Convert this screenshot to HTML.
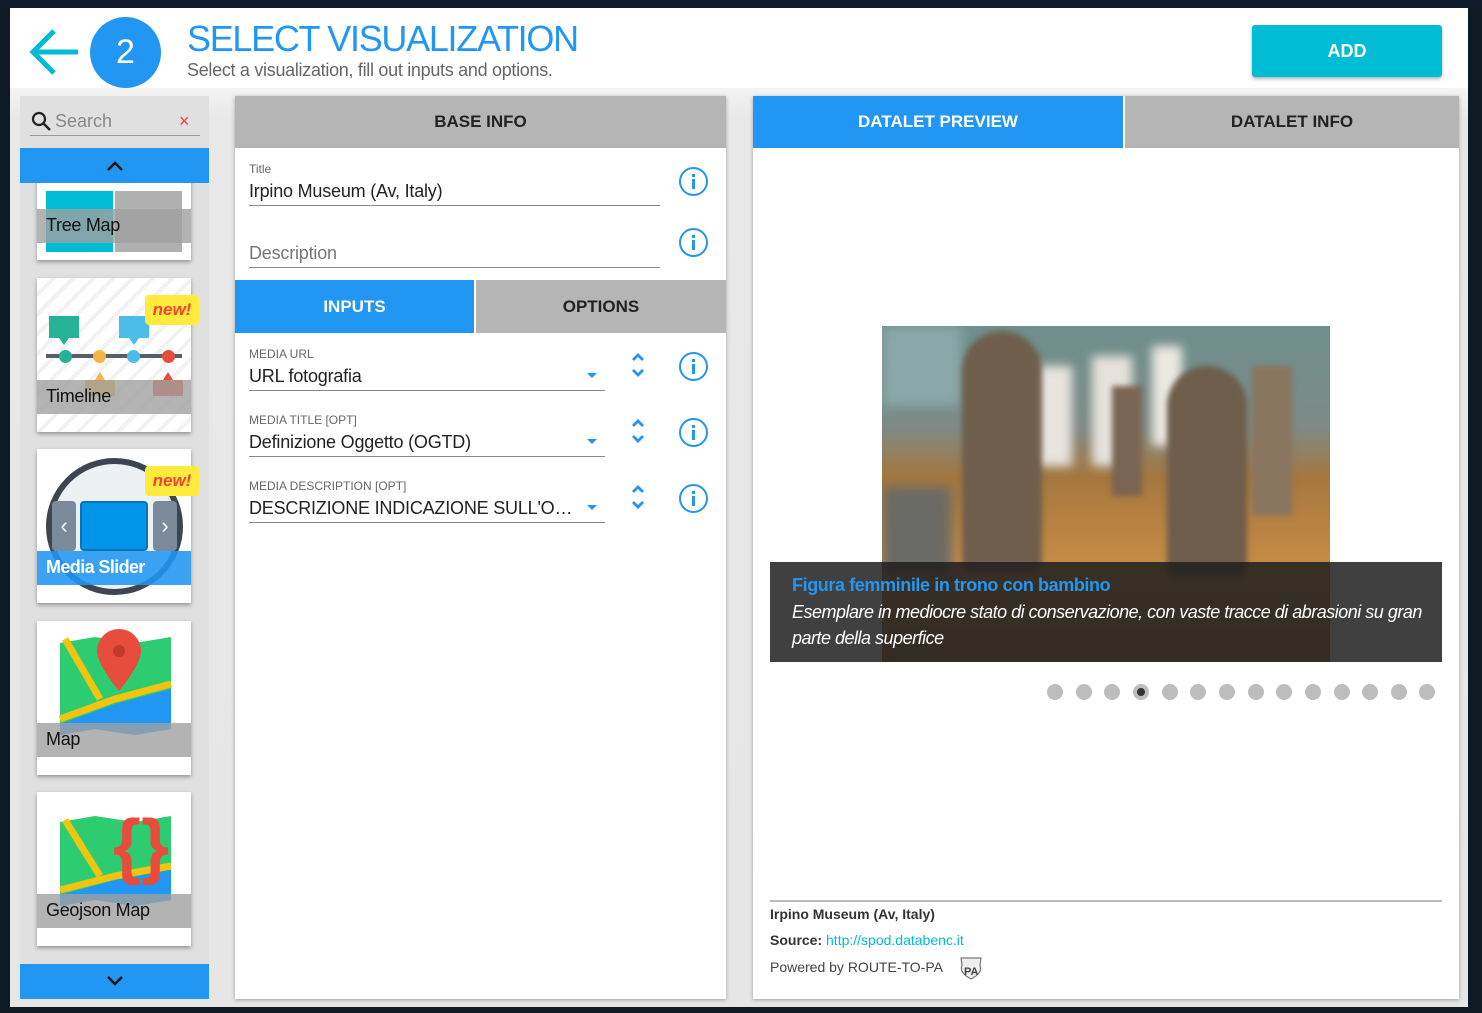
<!DOCTYPE html>
<html><head><meta charset="utf-8"><style>
*{box-sizing:border-box;margin:0;padding:0}
body{width:1482px;height:1013px;overflow:hidden;background:#0d1a24;font-family:"Liberation Sans",sans-serif;position:relative}
.abs{position:absolute}
#modal{left:10px;top:8px;width:1458px;height:999px;background:#fff}
.card{position:absolute;left:37px;width:154px;height:154px;background:#fff;box-shadow:0 2px 4px rgba(0,0,0,.35)}
.lbl{position:absolute;left:0;width:154px;height:34px;background:rgba(160,160,160,.8);font-size:18px;color:#111;padding:6px 9px;letter-spacing:-0.3px}
.new{position:absolute;right:-8px;width:54px;height:30px;background:#ffeb3b;border-radius:4px;color:#f44336;font-style:italic;font-weight:bold;font-size:17px;text-align:center;line-height:30px}
.ph{background:#b5b5b5;font-size:17px;font-weight:bold;color:#222;text-align:center}
.small{font-size:12px;color:#666}
.val{font-size:18px;color:#222;letter-spacing:-0.2px}
.line{height:1px;background:#888}
.info{position:absolute;width:29px;height:29px;border:2.5px solid #2196f3;border-radius:50%}
.info:before{content:"";position:absolute;left:11px;top:5px;width:3px;height:3px;background:#2196f3}
.info:after{content:"";position:absolute;left:11px;top:10px;width:3px;height:10px;background:#2196f3}
.dot{position:absolute;top:684px;width:16px;height:16px;border-radius:50%;background:#bdbdbd}
</style></head><body>
<div class="abs" style="left:0;top:0;width:1482px;height:8px;background:#0e1c2b"></div>
<div id="modal" class="abs"></div>
<div class="abs" style="left:10px;top:88px;width:1458px;height:919px;background:linear-gradient(#f4f4f4,#e8e8e8 30px,#e6e6e6)"></div>
<svg class="abs" style="left:28px;top:28px" width="54" height="50"><path d="M4 24 H50 M26 3 L5 24 L26 45" stroke="#00bcd4" stroke-width="5" fill="none"/></svg>
<div class="abs" style="left:90px;top:17px;width:71px;height:71px;border-radius:50%;background:#2196f3;color:#fff;font-size:34px;text-align:center;line-height:71px">2</div>
<div class="abs" style="left:187px;top:18px;font-size:36px;color:#2196f3;letter-spacing:-1.3px">SELECT VISUALIZATION</div>
<div class="abs" style="left:187px;top:60px;font-size:18px;color:#666;letter-spacing:-0.3px">Select a visualization, fill out inputs and options.</div>
<div class="abs" style="left:1252px;top:25px;width:190px;height:52px;background:#00bcd4;border-radius:3px;box-shadow:0 2px 3px rgba(0,0,0,.3);color:#fff;font-weight:bold;font-size:18px;text-align:center;line-height:52px">ADD</div>
<div class="abs" style="left:20px;top:96px;width:189px;height:903px;background:#e0e0e0;overflow:hidden">
 <div class="abs" style="left:10px;top:14px;width:170px;height:26px;border-bottom:1px solid #999"></div>
 <svg class="abs" style="left:11px;top:15px" width="22" height="22"><circle cx="8" cy="8" r="6" stroke="#222" stroke-width="2.2" fill="none"/><path d="M12 12 L19 19" stroke="#222" stroke-width="2.5"/></svg>
 <div class="abs" style="left:35px;top:15px;font-size:18px;color:#888">Search</div>
 <div class="abs" style="left:159px;top:15px;font-size:18px;color:#f44336">×</div>
 <div class="abs" style="left:0;top:52px;width:189px;height:35px;background:#2196f3"></div>
 <svg class="abs" style="left:85px;top:63px" width="20" height="14"><path d="M3 11 L10 4 L17 11" stroke="#111" stroke-width="2.5" fill="none"/></svg>
 <div class="abs" style="left:0;top:868px;width:189px;height:35px;background:#2196f3"></div>
 <svg class="abs" style="left:85px;top:878px" width="20" height="14"><path d="M3 3 L10 10 L17 3" stroke="#111" stroke-width="2.5" fill="none"/></svg>
</div>
<div class="abs" style="left:20px;top:183px;width:189px;height:781px;overflow:hidden">
 <div class="card" style="left:17px;top:-77px;overflow:hidden">
  <div class="abs" style="left:9px;top:85px;width:67px;height:61px;background:#00bcd4"></div>
  <div class="abs" style="left:78px;top:85px;width:67px;height:61px;background:#b0b0b0"></div>
  <div class="lbl" style="top:103px">Tree Map</div>
 </div>
 <div class="card" style="left:17px;top:95px;background:repeating-linear-gradient(135deg,#fff 0 10px,#f2f2f2 10px 14px)">
  <svg class="abs" style="left:0;top:0" width="154" height="154">
   <path d="M12 38 h30 v22 h-10 l-5 7 l-5 -7 h-10z" fill="#26b297"/>
   <path d="M82 38 h30 v22 h-10 l-5 7 l-5 -7 h-10z" fill="#4bbde8"/>
   <path d="M48 118 v-16 h10 l5 -8 l5 8 h10 v16z" fill="#f5b544"/>
   <path d="M116 118 v-16 h10 l5 -8 l5 8 h10 v16z" fill="#e74c3c"/>
  </svg>
  <div class="abs" style="left:9px;top:76px;width:136px;height:4px;background:#55606b"></div>
  <div class="abs" style="left:22px;top:72px;width:13px;height:13px;border-radius:50%;background:#26b297"></div>
  <div class="abs" style="left:56px;top:72px;width:13px;height:13px;border-radius:50%;background:#f5b544"></div>
  <div class="abs" style="left:90px;top:72px;width:13px;height:13px;border-radius:50%;background:#4bbde8"></div>
  <div class="abs" style="left:125px;top:72px;width:13px;height:13px;border-radius:50%;background:#e74c3c"></div>
  <div class="lbl" style="top:102px">Timeline</div>
  <div class="new" style="top:17px">new!</div>
 </div>
 <div class="card" style="left:17px;top:266px">
  <div class="abs" style="left:9px;top:9px;width:137px;height:137px;border-radius:50%;border:6px solid #3d4650;background:#eef1f4"></div>
  <div class="abs" style="left:15px;top:52px;width:24px;height:50px;background:#7b8a9b;border-radius:4px;color:#fff;text-align:center;line-height:50px;font-size:22px">‹</div>
  <div class="abs" style="left:116px;top:52px;width:24px;height:50px;background:#7b8a9b;border-radius:4px;color:#fff;text-align:center;line-height:50px;font-size:22px">›</div>
  <div class="abs" style="left:43px;top:52px;width:68px;height:50px;background:#0095e8;border:2px solid #0a73b8;border-radius:4px"></div>
  <div class="lbl" style="top:102px;background:rgba(33,150,243,.88);color:#fff;font-weight:bold;letter-spacing:-0.6px">Media Slider</div>
  <div class="new" style="top:17px">new!</div>
 </div>
 <div class="card" style="left:17px;top:438px;overflow:hidden">
  <svg class="abs" style="left:18px;top:8px" width="120" height="120"><path d="M5 14 L40 8 L80 14 L116 8 V100 L80 106 L40 100 L5 106Z" fill="#2ecc71"/><path d="M5 95 L60 75 L116 60 V100 L80 106 L40 100 L5 106Z" fill="#2196f3"/><path d="M5 90 L60 70 L116 55" stroke="#f1c40f" stroke-width="7" fill="none"/><path d="M10 10 L45 70" stroke="#f1c40f" stroke-width="7"/><path d="M64 0 a22 22 0 0 1 22 22 c0 14 -22 40 -22 40 c0 0 -22 -26 -22 -40 a22 22 0 0 1 22 -22z" fill="#e74c3c"/><circle cx="64" cy="22" r="6" fill="#c0392b"/></svg>
  <div class="lbl" style="top:102px">Map</div>
 </div>
 <div class="card" style="left:17px;top:609px;overflow:hidden">
  <svg class="abs" style="left:18px;top:8px" width="120" height="120"><path d="M5 22 L40 16 L80 22 L116 16 V100 L80 106 L40 100 L5 106Z" fill="#2ecc71"/><path d="M5 95 L60 80 L116 70 V100 L80 106 L40 100 L5 106Z" fill="#2196f3"/><path d="M5 90 L60 76 L116 66" stroke="#f1c40f" stroke-width="7" fill="none"/><path d="M10 20 L45 76" stroke="#f1c40f" stroke-width="7"/><text x="58" y="70" font-size="72" font-family="Liberation Sans" fill="#e74c3c" font-weight="bold">{}</text></svg>
  <div class="lbl" style="top:102px">Geojson Map</div>
 </div>
</div>
<div class="abs" style="left:235px;top:96px;width:491px;height:903px;background:#fff;box-shadow:0 1px 4px rgba(0,0,0,.3)">
 <div class="abs ph" style="left:0;top:0;width:491px;height:52px;line-height:52px">BASE INFO</div>
 <div class="abs small" style="left:14px;top:66px">Title</div>
 <div class="abs val" style="left:14px;top:85px">Irpino Museum (Av, Italy)</div>
 <div class="abs line" style="left:14px;top:109px;width:411px"></div>
 <div class="info" style="left:444px;top:71px"></div>
 <div class="abs val" style="left:14px;top:147px;color:#777">Description</div>
 <div class="abs line" style="left:14px;top:171px;width:411px"></div>
 <div class="info" style="left:444px;top:132px"></div>
 <div class="abs ph" style="left:0;top:184px;width:239px;height:53px;line-height:53px;background:#2196f3;color:#fff">INPUTS</div>
 <div class="abs ph" style="left:241px;top:184px;width:250px;height:53px;line-height:53px">OPTIONS</div>
 <div class="abs small" style="left:14px;top:251px">MEDIA URL</div>
 <div class="abs val" style="left:14px;top:270px">URL fotografia</div>
 <div class="abs small" style="left:14px;top:317px">MEDIA TITLE [OPT]</div>
 <div class="abs val" style="left:14px;top:336px">Definizione Oggetto (OGTD)</div>
 <div class="abs small" style="left:14px;top:383px">MEDIA DESCRIPTION [OPT]</div>
 <div class="abs val" style="left:14px;top:402px;width:332px;white-space:nowrap;overflow:hidden;text-overflow:ellipsis">DESCRIZIONE INDICAZIONE SULL'OGGETTO</div>
</div>
<div class="abs line" style="left:249px;top:390px;width:356px"></div>
<div class="abs line" style="left:249px;top:456px;width:356px"></div>
<div class="abs line" style="left:249px;top:522px;width:356px"></div>
<svg class="abs" style="left:580px;top:350px" width="70" height="170">
 <path d="M7 23 L12 28 L17 23Z M7 89 L12 94 L17 89Z M7 155 L12 160 L17 155Z" fill="#2196f3"/>
 <g stroke="#2196f3" stroke-width="2.8" fill="none">
 <path d="M53 10 L58 5 L63 10 M53 20 L58 25 L63 20"/>
 <path d="M53 76 L58 71 L63 76 M53 86 L58 91 L63 86"/>
 <path d="M53 142 L58 137 L63 142 M53 152 L58 157 L63 152"/></g>
</svg>
<div class="info" style="left:679px;top:352px"></div>
<div class="info" style="left:679px;top:418px"></div>
<div class="info" style="left:679px;top:484px"></div>
<div class="abs" style="left:753px;top:96px;width:706px;height:903px;background:#fff;box-shadow:0 1px 4px rgba(0,0,0,.3)">
 <div class="abs ph" style="left:0;top:0;width:370px;height:52px;line-height:52px;background:#2196f3;color:#fff">DATALET PREVIEW</div>
 <div class="abs ph" style="left:372px;top:0;width:334px;height:52px;line-height:52px">DATALET INFO</div>
</div>
<div class="abs" style="left:882px;top:326px;width:448px;height:336px;overflow:hidden;background:linear-gradient(#6f8f8c 0,#7d8a86 30%,#a5773e 45%,#c58b45 70%,#b07a3c 100%)">
 <div class="abs" style="left:0;top:0;width:80px;height:80px;background:#8aa8a8;filter:blur(6px)"></div>
 <div class="abs" style="left:0;top:160px;width:70px;height:90px;background:#6a6a66;filter:blur(6px)"></div>
 <div class="abs" style="left:150px;top:40px;width:40px;height:100px;background:#e8e4de;filter:blur(5px)"></div>
 <div class="abs" style="left:210px;top:30px;width:40px;height:110px;background:#e6e2dc;filter:blur(5px)"></div>
 <div class="abs" style="left:270px;top:20px;width:30px;height:100px;background:#ebe8e2;filter:blur(5px)"></div>
 <div class="abs" style="left:80px;top:5px;width:80px;height:240px;background:#6f5e4c;border-radius:40px 40px 10px 10px;filter:blur(3px)"></div>
 <div class="abs" style="left:285px;top:40px;width:80px;height:210px;background:#6e5d4b;border-radius:40px 40px 10px 10px;filter:blur(3px)"></div>
 <div class="abs" style="left:230px;top:60px;width:30px;height:110px;background:#7a6452;filter:blur(3px)"></div>
 <div class="abs" style="left:370px;top:40px;width:40px;height:150px;background:#8a7560;filter:blur(3px)"></div>
</div>
<div class="abs" style="left:770px;top:562px;width:672px;height:100px;background:rgba(30,30,30,.85)"></div>
<div class="abs" style="left:792px;top:575px;font-size:18px;font-weight:bold;color:#2196f3;letter-spacing:-0.4px">Figura femminile in trono con bambino</div>
<div class="abs" style="left:792px;top:599px;width:640px;font-size:18px;font-style:italic;color:#fff;line-height:26px;letter-spacing:-0.5px">Esemplare in mediocre stato di conservazione, con vaste tracce di abrasioni su gran parte della superfice</div>
<div class="dot" style="left:1047px"></div><div class="dot" style="left:1076px"></div><div class="dot" style="left:1104px"></div>
<div class="dot" style="left:1133px;border:4px solid #bdbdbd"><div style="width:8px;height:8px;border-radius:50%;background:#333"></div></div>
<div class="dot" style="left:1162px"></div><div class="dot" style="left:1190px"></div><div class="dot" style="left:1219px"></div><div class="dot" style="left:1248px"></div><div class="dot" style="left:1276px"></div><div class="dot" style="left:1305px"></div><div class="dot" style="left:1334px"></div><div class="dot" style="left:1362px"></div><div class="dot" style="left:1391px"></div><div class="dot" style="left:1419px"></div>
<div class="abs" style="left:770px;top:900px;width:672px;height:2px;background:#bbb"></div>
<div class="abs" style="left:770px;top:906px;font-size:14px;font-weight:bold;color:#333">Irpino Museum (Av, Italy)</div>
<div class="abs" style="left:770px;top:932px;font-size:14px;color:#333"><b>Source:</b> <span style="color:#00bcd4">http://spod.databenc.it</span></div>
<div class="abs" style="left:770px;top:959px;font-size:14px;color:#444">Powered by ROUTE-TO-PA</div>
<svg class="abs" style="left:957px;top:955px" width="28" height="26"><path d="M4 3 H24 L23 10 Q26 18 14 24 Q2 18 5 10Z" fill="#eee" stroke="#777" stroke-width="1.2"/><text x="7" y="20" font-size="11" font-weight="bold" font-family="Liberation Sans" fill="#444">PA</text></svg>
</body></html>
